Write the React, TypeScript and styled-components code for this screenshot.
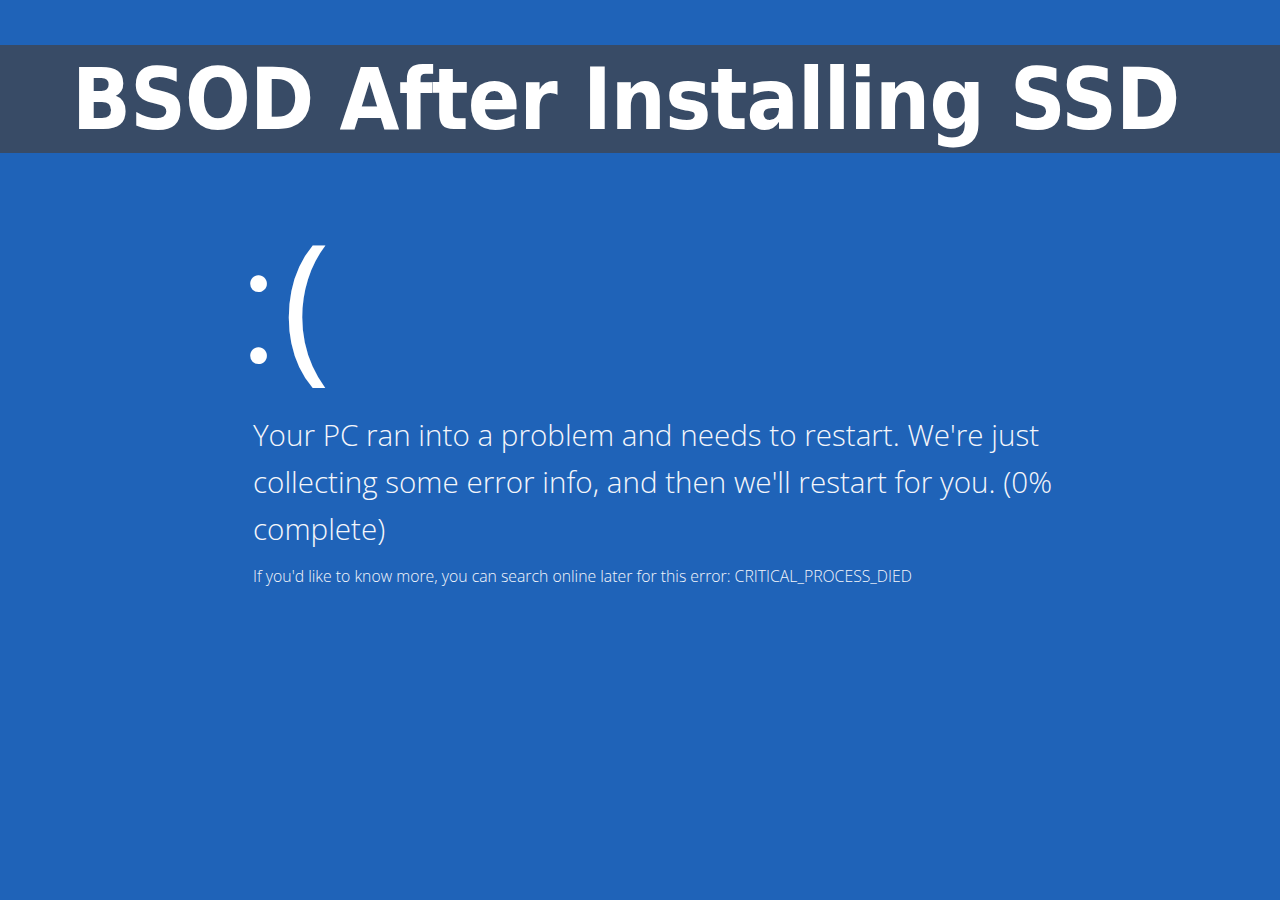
import React from "react";
import styled, { createGlobalStyle } from "styled-components";

const Global = createGlobalStyle`
  html, body { margin: 0; padding: 0; background: #1f63b8; }
  #root { width: 1280px; height: 900px; }
`;

const Screen = styled.div`
  width: 1280px;
  height: 900px;
  background: #1f63b8;
  padding-top: 45px;
  box-sizing: border-box;
  overflow: hidden;
`;

const Banner = styled.div`
  height: 108px;
  background: #384b66;
  display: flex;
  align-items: center;
  padding-left: 72px;
`;

const Title = styled.h1`
  margin: 0;
  font-family: "DejaVu Sans Condensed", "DejaVu Sans", Verdana, sans-serif;
  font-stretch: condensed;
  font-weight: bold;
  font-size: 86px;
  letter-spacing: -0.8px;
  white-space: nowrap;
  color: #ffffff;
  line-height: 1;
`;

const Body = styled.div`
  padding: 49px 0 0 253px;
  display: flex;
  flex-direction: column;
  color: #ffffff;
  font-family: "Open Sans", "Noto Sans", sans-serif;
`;

const Face = styled.div`
  display: flex;
  align-items: baseline;
  height: 160px;
  line-height: 1;
  margin-left: -16px;
`;

const Colon = styled.span`
  font-family: Lato, "Open Sans", sans-serif;
  font-size: 180px;
  font-weight: 300;
  transform: translateY(1px);
`;

const Paren = styled.span`
  font-size: 163px;
  font-weight: 400;
  margin-left: 2px;
`;

const Message = styled.p`
  margin: 49px 0 0;
  font-size: 29.6px;
  font-weight: 300;
  line-height: 47px;
  width: 840px;
  color: #f4f6fb;
`;

const Note = styled.p`
  margin: 13px 0 0;
  font-size: 15.8px;
  font-weight: 300;
  color: #f4f6fb;
`;

export default function App() {
  return (
    <Screen>
      <Global />
      <Banner>
        <Title>BSOD After Installing SSD</Title>
      </Banner>
      <Body>
        <Face>
          <Colon>:</Colon>
          <Paren>(</Paren>
        </Face>
        <Message>
          Your PC ran into a problem and needs to restart. We're just collecting some error info, and then we'll restart for you. (0% complete)
        </Message>
        <Note>If you'd like to know more, you can search online later for this error: CRITICAL_PROCESS_DIED</Note>
      </Body>
    </Screen>
  );
}
